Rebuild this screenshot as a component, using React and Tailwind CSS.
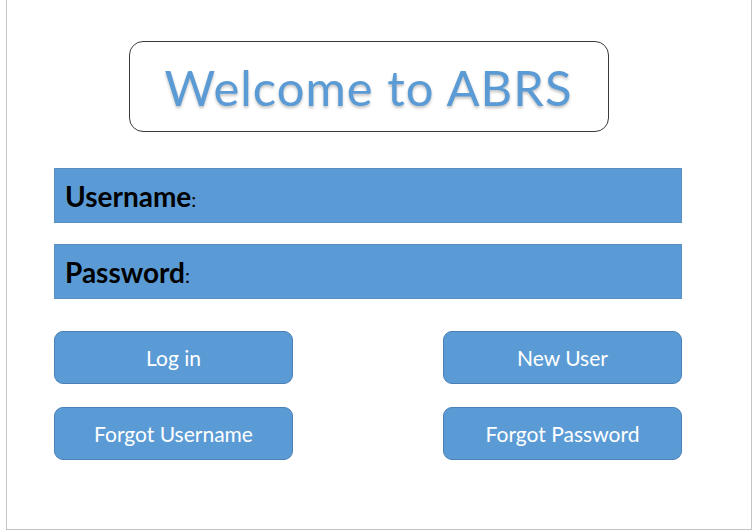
export default function App() {
  const font = { fontFamily: 'Lato, "Open Sans", sans-serif' };
  return (
    <div className="w-[754px] h-[532px] bg-white" style={font}>
      <div className="ml-[6px] w-[746px] h-[530px] border-l border-r border-b border-[#c4c4c4] flex flex-col pt-[41px] pl-[47px]">
        <div className="w-[628px] flex flex-col">
          <div className="self-center ml-[1px] w-[480px] h-[91px] border border-[#3a3a3a] rounded-[14px] flex items-center justify-center">
            <span className="text-[49px] tracking-[1px] leading-none text-[#5b9bd5] [text-shadow:0_2px_3px_rgba(0,0,0,0.25)] mt-[1px]">
              Welcome to ABRS
            </span>
          </div>
          <div className="mt-[36px] h-[55px] bg-[#5b9bd5] border border-[#5a8fc4] flex items-center pl-[10px] pt-[1px]">
            <span className="text-[28px] font-bold text-black leading-none">Username</span>
            <span className="text-[20px] text-black leading-none mt-[6px]">:</span>
          </div>
          <div className="mt-[21px] h-[55px] bg-[#5b9bd5] border border-[#5a8fc4] flex items-center pl-[10px] pt-[1px]">
            <span className="text-[28px] font-bold text-black leading-none">Password</span>
            <span className="text-[20px] text-black leading-none mt-[6px]">:</span>
          </div>
          <div className="mt-[32px] grid grid-cols-[239px_239px] justify-between gap-y-[23px]">
            {['Log in', 'New User', 'Forgot Username', 'Forgot Password'].map((t) => (
              <div
                key={t}
                className="h-[53px] rounded-[9px] bg-[#5b9bd5] border border-[#4a80b5] flex items-center justify-center text-white text-[21px] leading-none"
              >
                {t}
              </div>
            ))}
          </div>
        </div>
      </div>
    </div>
  );
}
